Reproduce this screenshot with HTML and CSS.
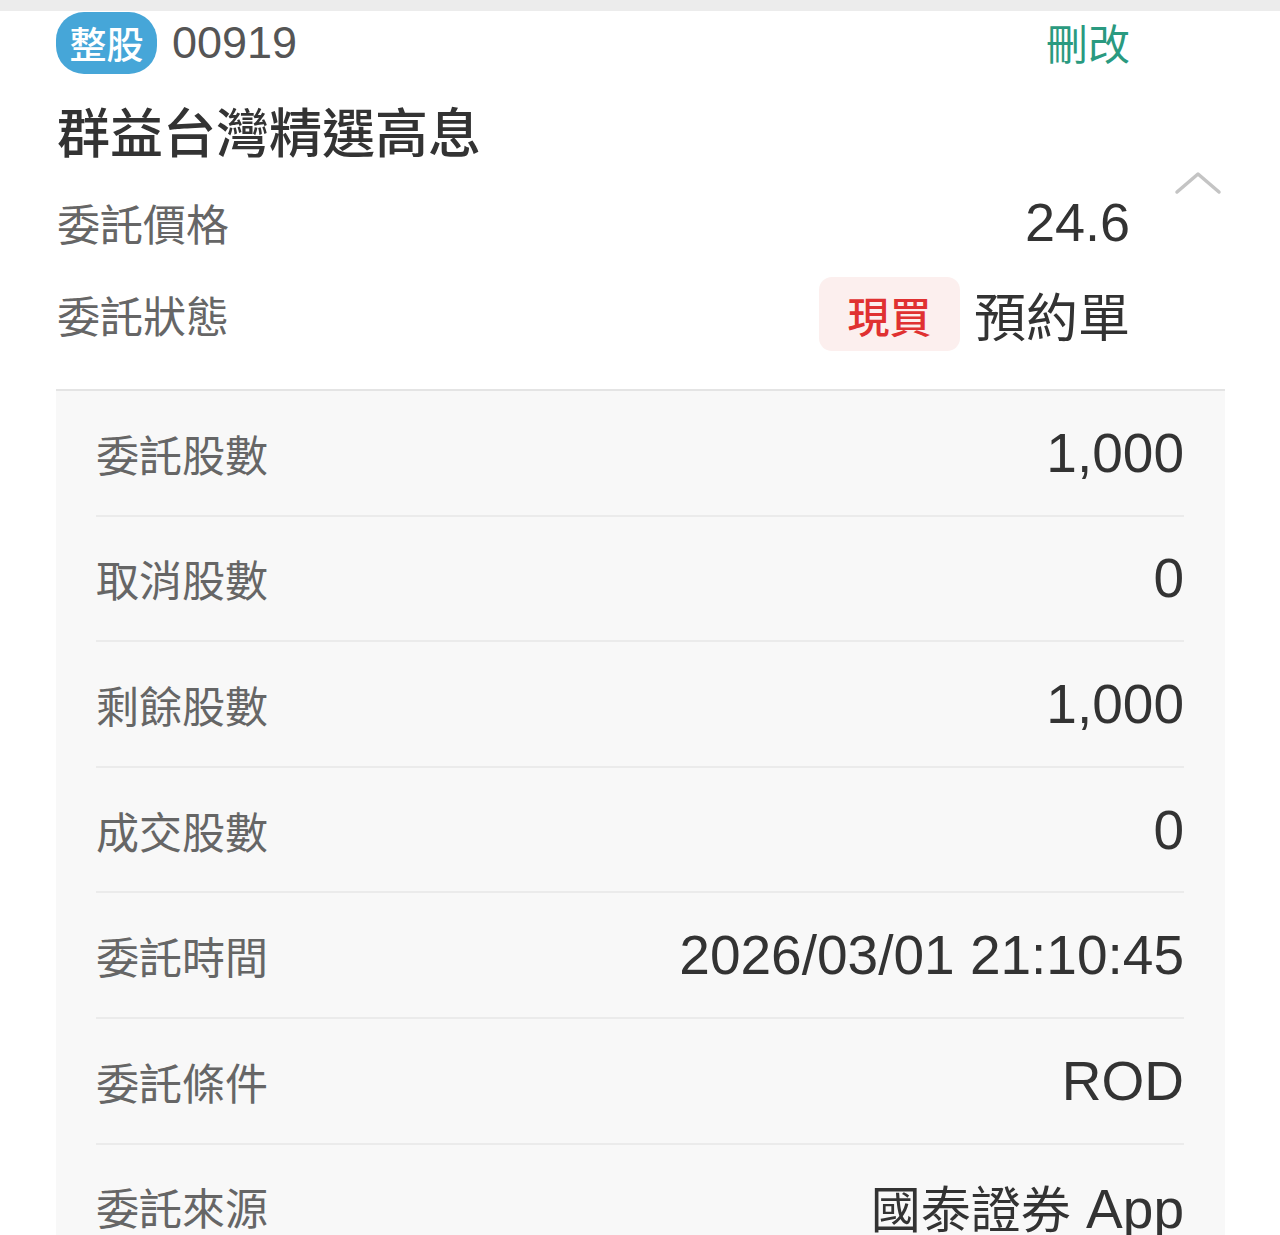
FILE: index.html
```html
<!DOCTYPE html>
<html lang="zh-Hant">
<head>
<meta charset="utf-8">
<link rel="stylesheet" href="styles.css">
</head>
<body>
<div class="topbar"></div>
<div class="top">
  <div class="head">
    <span class="badge">整股</span>
    <span class="code">00919</span>
    <span class="spacer"></span>
    <span class="edit">刪改</span>
  </div>
  <div class="title">群益台灣精選高息</div>
  <div class="info-row">
    <span class="label">委託價格</span>
    <span class="price">24.6</span>
  </div>
  <div class="info-row">
    <span class="label">委託狀態</span>
    <span class="status"><span class="tag">現買</span><span class="status-text">預約單</span></span>
  </div>
  <svg class="chevron" width="48" height="26" viewBox="0 0 48 26"><polyline points="3,22 24,4 45,22" fill="none" stroke="#c4c4c4" stroke-width="3.5" stroke-linecap="round" stroke-linejoin="round"/></svg>
</div>
<div class="panel">
  <div class="row"><span class="rlabel">委託股數</span><span class="rvalue">1,000</span></div>
  <div class="row"><span class="rlabel">取消股數</span><span class="rvalue">0</span></div>
  <div class="row"><span class="rlabel">剩餘股數</span><span class="rvalue">1,000</span></div>
  <div class="row"><span class="rlabel">成交股數</span><span class="rvalue">0</span></div>
  <div class="row"><span class="rlabel">委託時間</span><span class="rvalue">2026/03/01 21:10:45</span></div>
  <div class="row"><span class="rlabel">委託條件</span><span class="rvalue">ROD</span></div>
  <div class="row"><span class="rlabel">委託來源</span><span class="rvalue"><span class="cjk">國泰證券</span> App</span></div>
</div>
</body>
</html>
```
FILE: styles.css
```css
* { box-sizing: border-box; }
html, body { margin: 0; padding: 0; }
body {
  background: #ffffff;
  font-family: "Liberation Sans", "Noto Sans CJK TC", sans-serif;
  color: #333333;
  height: 1235px;
  overflow: hidden;
}
.topbar { height: 11px; background: #ececec; }
.top {
  position: relative;
  padding: 0 150px 0 56px;
}
.head {
  margin-top: 1px;
  height: 62px;
  display: flex;
  align-items: center;
}
.badge {
  display: flex;
  align-items: center;
  justify-content: center;
  width: 101px;
  height: 62px;
  border-radius: 28px;
  background: #46a6d8;
  color: #ffffff;
  font-family: "Noto Sans CJK TC", sans-serif;
  font-size: 37px;
  font-weight: 500;
}
.code {
  margin-left: 15px;
  font-size: 45px;
  color: #555555;
}
.spacer { flex: 1; }
.edit {
  font-family: "Noto Sans CJK TC", sans-serif;
  font-size: 42px;
  color: #2a9a80;
  margin-top: -4px;
}
.title {
  margin-top: 26px;
  height: 60px;
  line-height: 60px;
  font-family: "Noto Sans CJK TC", sans-serif;
  font-size: 53px;
  font-weight: 500;
  color: #333333;
  margin-left: 1px;
}
.info-row {
  height: 92px;
  display: flex;
  align-items: center;
  justify-content: space-between;
}
.title + .info-row { margin-top: 16px; }
.label {
  font-family: "Noto Sans CJK TC", sans-serif;
  font-size: 43px;
  color: #666666;
  margin-left: 1px;
}
.price { font-size: 54px; color: #333333; }
.status { display: flex; align-items: center; }
.tag {
  display: flex;
  align-items: center;
  justify-content: center;
  width: 141px;
  height: 74px;
  border-radius: 13px;
  background: #fcefee;
  color: #e03131;
  font-family: "Noto Sans CJK TC", sans-serif;
  font-size: 42px;
  font-weight: 500;
}
.status-text {
  margin-left: 14px;
  font-family: "Noto Sans CJK TC", sans-serif;
  font-size: 52px;
  color: #333333;
}
.chevron {
  position: absolute;
  left: 1174px;
  top: 158px;
}
.panel {
  margin: 29px 55px 0 56px;
  border-top: 2px solid #e4e4e4;
  background: #f8f8f8;
  padding: 0 41px 0 40px;
}
.row {
  height: 125.6px;
  display: flex;
  align-items: center;
  justify-content: space-between;
  border-bottom: 2px solid #ebebeb;
}
.rlabel {
  font-family: "Noto Sans CJK TC", sans-serif;
  font-size: 43px;
  color: #666666;
}
.rvalue {
  font-size: 55px;
  color: #333333;
}
.cjk {
  font-family: "Noto Sans CJK TC", sans-serif;
  font-size: 50px;
}
```
